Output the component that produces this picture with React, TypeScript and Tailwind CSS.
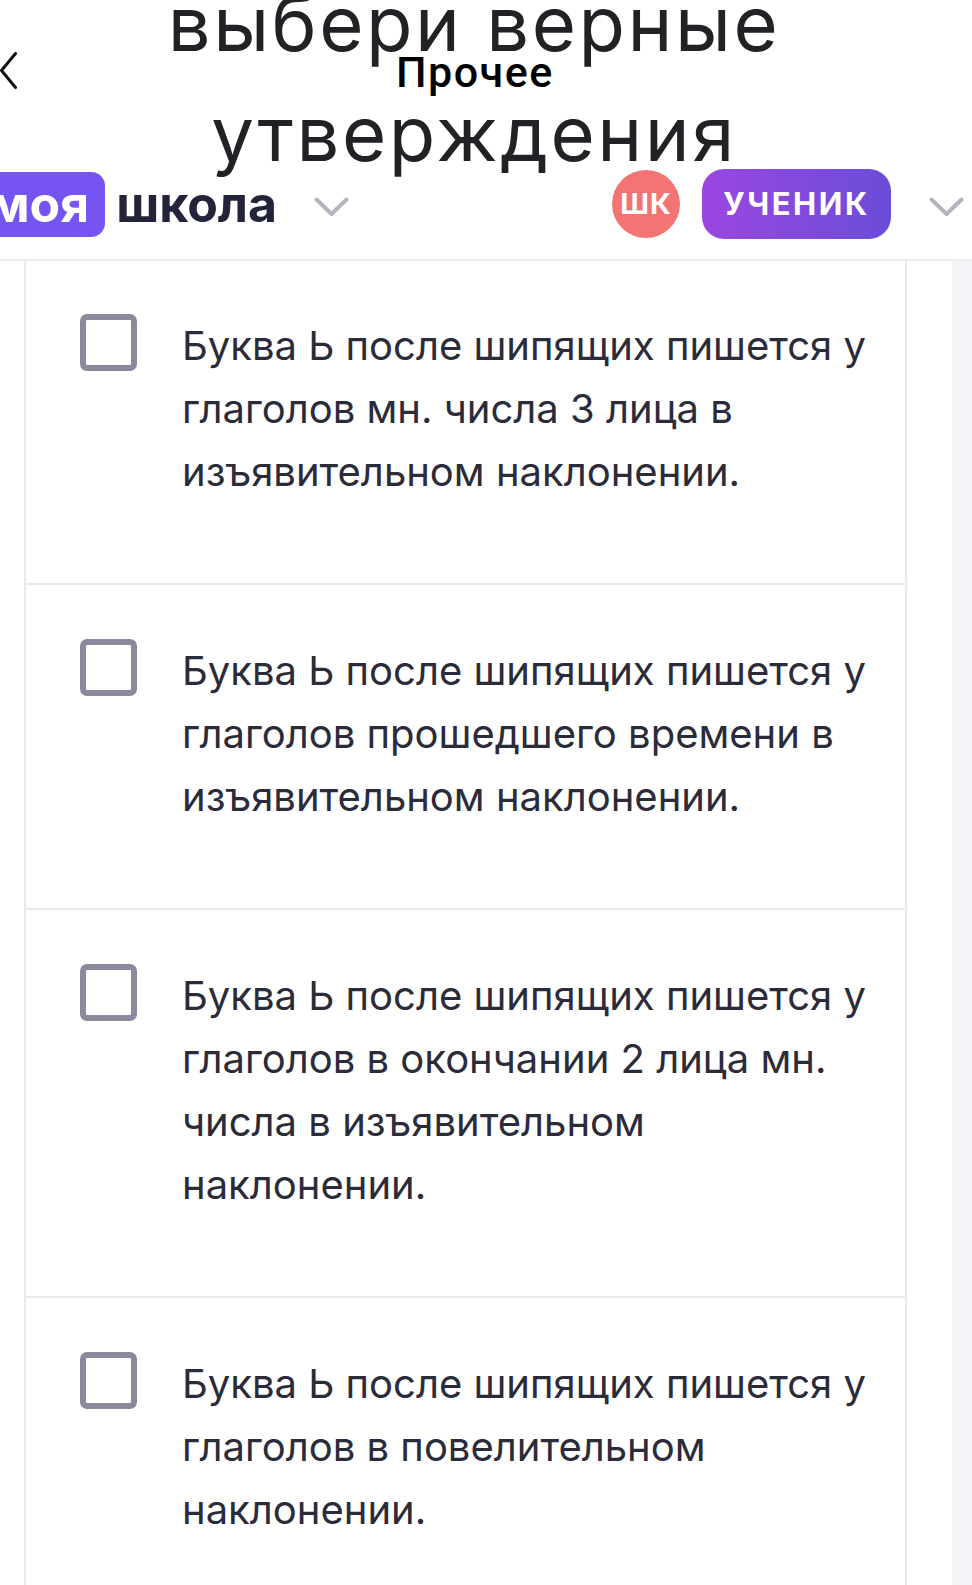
import React from "react";

const items: string[][] = [
  ["Буква Ь после шипящих пишется у", "глаголов мн. числа 3 лица в", "изъявительном наклонении."],
  ["Буква Ь после шипящих пишется у", "глаголов прошедшего времени в", "изъявительном наклонении."],
  ["Буква Ь после шипящих пишется у", "глаголов в окончании 2 лица мн.", "числа в изъявительном", "наклонении."],
  ["Буква Ь после шипящих пишется у", "глаголов в повелительном", "наклонении."],
];

function ChevronDown() {
  return (
    <svg width="35" height="20" viewBox="0 0 35 20" fill="none">
      <polyline points="2.5,2.5 17.5,17 32.5,2.5" stroke="#b4b4c0" strokeWidth="4" strokeLinecap="round" strokeLinejoin="round" />
    </svg>
  );
}

export default function App() {
  return (
    <div
      className="w-[972px] h-[1585px] overflow-hidden bg-white"
      style={{ fontFamily: "Inter, 'Noto Sans', sans-serif" }}
    >
      <header className="relative flex h-[261px] flex-col border-b-2 border-[#ececf0]">
        <div className="mt-[-32px] h-[201px] shrink-0 pr-[24px] text-center text-[76px] leading-[110px] font-normal tracking-[2.5px] text-[#222226]">
          выбери верные
          <br />
          утверждения
        </div>
        <div className="absolute left-0 top-[52px]">
          <svg width="17" height="37" viewBox="0 0 17 37" fill="none">
            <polyline points="15.5,1.5 1.5,18.5 15.5,35.5" stroke="#111" strokeWidth="3" strokeLinecap="round" strokeLinejoin="round" />
          </svg>
        </div>
        <div
          className="absolute left-[396px] top-[48px] text-[43px] leading-[48px] font-medium tracking-[1.5px] text-black"
          style={{ fontFamily: "Roboto, 'Noto Sans', sans-serif" }}
        >
          Прочее
        </div>
        <div className="flex h-[70px] shrink-0 items-center">
          <div className="ml-[-23px] flex h-[65px] items-center rounded-[14px] bg-[#7554f1] pl-[12px] pr-[16px] text-[50px] font-bold leading-none text-white">
            моя
          </div>
          <div className="ml-[11px] text-[50px] font-bold leading-none text-[#23233a]">школа</div>
          <div className="ml-[37px] mt-[6px] flex">
            <ChevronDown />
          </div>
          <div className="ml-auto flex h-[68px] w-[68px] items-center justify-center rounded-full bg-[#f47373] text-[29px] font-bold tracking-[1px] text-white">
            ШК
          </div>
          <div className="ml-[22px] flex h-[70px] w-[189px] items-center justify-center rounded-[22px] bg-gradient-to-r from-[#9a46e0] to-[#6a4cd9] text-[31px] font-bold tracking-[2.5px] text-white">
            УЧЕНИК
          </div>
          <div className="ml-[38px] mr-[8px] mt-[6px] flex">
            <ChevronDown />
          </div>
        </div>
      </header>
      <div className="flex">
        <div className="ml-[24px] w-[883px] border-x-2 border-[#e9e9ee]">
          {items.map((lines, i) => (
            <div
              key={i}
              className={`flex items-start pl-[54px] pr-[20px] pb-[80px] ${i === 0 ? "pt-[53px]" : "pt-[54px]"} ${i < items.length - 1 ? "border-b-2 border-[#e9e9ee]" : ""}`}
            >
              <div className="h-[57px] w-[57px] shrink-0 rounded-[7px] border-[6px] border-[#8a8a9c] bg-white" />
              <div className="ml-[45px] whitespace-nowrap text-[40px] leading-[63px] text-[#2b2b3a]">
                {lines.map((l, j) => (
                  <div key={j}>{l}</div>
                ))}
              </div>
            </div>
          ))}
        </div>
        <div className="ml-auto w-[20px] self-stretch bg-[#f4f4f8]" />
      </div>
    </div>
  );
}
